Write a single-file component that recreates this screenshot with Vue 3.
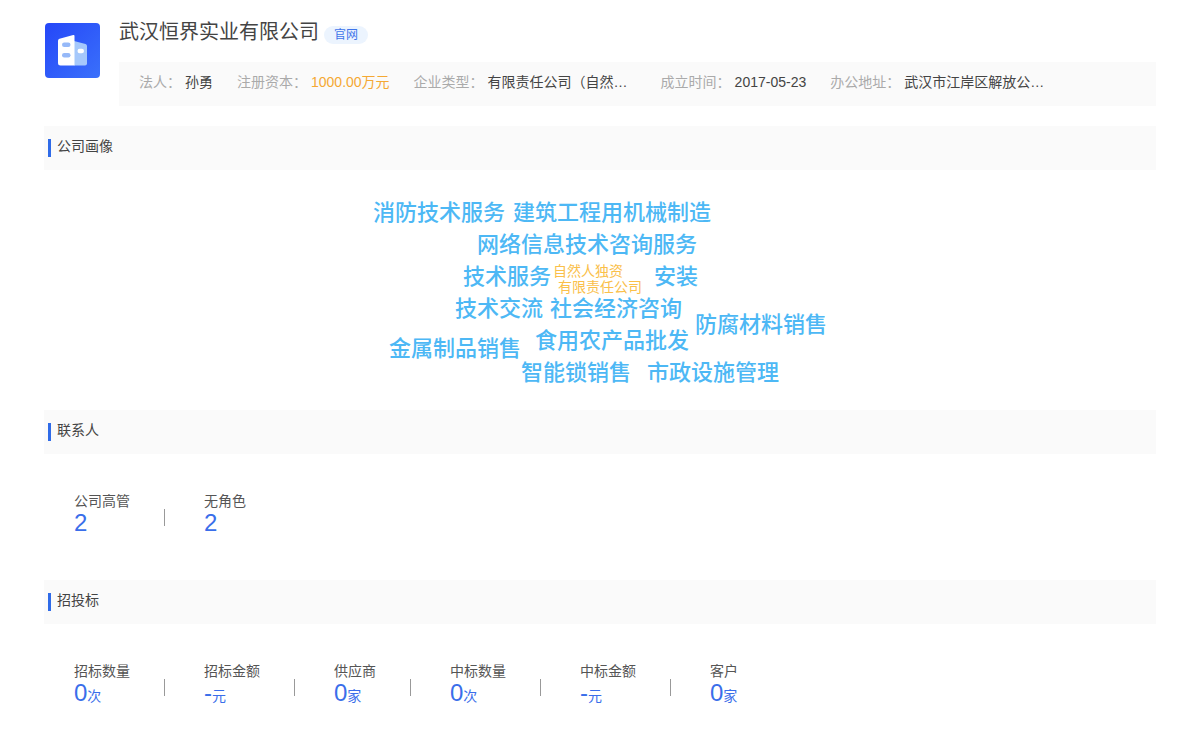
<script setup>
const info = [
  { label: '法人', value: '孙勇' },
  { label: '注册资本', value: '1000.00万元', money: true },
  { label: '企业类型', value: '有限责任公司（自然…', wide: true },
  { label: '成立时间', value: '2017-05-23' },
  { label: '办公地址', value: '武汉市江岸区解放公…', wide: true },
]

// Word positions are relative to the centre line and top of the cloud.
const words = [
  { text: '消防技术服务', x: -227, y: 27 },
  { text: '建筑工程用机械制造', x: -87, y: 27 },
  { text: '网络信息技术咨询服务', x: -123, y: 59 },
  { text: '技术服务', x: -137, y: 91 },
  { text: '自然人独资', x: -47, y: 90, minor: true },
  { text: '有限责任公司', x: -42, y: 106, minor: true },
  { text: '安装', x: 54, y: 91 },
  { text: '技术交流', x: -145, y: 123 },
  { text: '社会经济咨询', x: -50, y: 123 },
  { text: '防腐材料销售', x: 95, y: 139 },
  { text: '食用农产品批发', x: -65, y: 155 },
  { text: '金属制品销售', x: -211, y: 163 },
  { text: '智能锁销售', x: -79, y: 187 },
  { text: '市政设施管理', x: 47, y: 187 },
]

const contacts = [
  { label: '公司高管', value: '2' },
  { label: '无角色', value: '2' },
]

const bids = [
  { label: '招标数量', value: '0', unit: '次' },
  { label: '招标金额', value: '-', unit: '元' },
  { label: '供应商', value: '0', unit: '家' },
  { label: '中标数量', value: '0', unit: '次' },
  { label: '中标金额', value: '-', unit: '元' },
  { label: '客户', value: '0', unit: '家' },
]
</script>

<template>
  <main class="page">
    <header class="company">
      <svg class="logo" viewBox="0 0 55 55" aria-hidden="true">
        <defs>
          <linearGradient id="logo-bg" x1="0" y1="0" x2="1" y2="1">
            <stop offset="0" stop-color="#2547f8" />
            <stop offset="1" stop-color="#3a70fb" />
          </linearGradient>
        </defs>
        <rect width="55" height="55" rx="4" fill="url(#logo-bg)" />
        <path d="M29 18 L40.500 21 Q42 21.500 42 23 V40.500 Q42 42.500 40 42.500 H29Z" fill="#a5c8fb" />
        <path d="M14.500 15.700 L28.200 12 Q29.500 11.700 29.500 13 V42.500 H15.500 Q13 42.500 13 40 V17.500 Q13 16.200 14.500 15.700Z" fill="#fff" />
        <rect x="17" y="19.500" width="8.500" height="4.500" rx="2.200" fill="#96b9f8" />
        <rect x="17" y="30" width="8.500" height="4.500" rx="2.200" fill="#96b9f8" />
        <rect x="32.500" y="25.700" width="6.500" height="4.500" rx="2.200" fill="#fff" />
      </svg>
      <div class="summary">
        <div class="heading">
          <h1>武汉恒界实业有限公司</h1>
          <a class="site" href="#">官网</a>
        </div>
        <dl class="info">
          <div v-for="item in info" :key="item.label" class="info-item">
            <dt>{{ item.label }}：</dt>
            <dd :class="{ money: item.money, wide: item.wide }">{{ item.value }}</dd>
          </div>
        </dl>
      </div>
    </header>

    <section>
      <h2>公司画像</h2>
      <div class="cloud">
        <div class="origin">
          <span
            v-for="word in words"
            :key="word.text"
            class="word"
            :class="{ minor: word.minor }"
            :style="{ left: word.x + 'px', top: word.y + 'px' }"
          >{{ word.text }}</span>
        </div>
      </div>
    </section>

    <section>
      <h2>联系人</h2>
      <ul class="stats">
        <li v-for="item in contacts" :key="item.label">
          <span class="label">{{ item.label }}</span>
          <span class="value">{{ item.value }}</span>
        </li>
      </ul>
    </section>

    <section>
      <h2>招投标</h2>
      <ul class="stats">
        <li v-for="item in bids" :key="item.label">
          <span class="label">{{ item.label }}</span>
          <span class="value">{{ item.value }}<small>{{ item.unit }}</small></span>
        </li>
      </ul>
    </section>
  </main>
</template>

<style>
body {
  background: #fff;
}
</style>

<style scoped>
.page {
  padding: 20px 44px 0;
  font-family: "Liberation Sans", "Noto Sans CJK SC", sans-serif;
  font-size: 14px;
  line-height: 20px;
  color: #444;
}

h1,
h2,
dl,
dd,
ul {
  margin: 0;
  padding: 0;
  font-weight: inherit;
}

.company {
  display: flex;
  gap: 19px;
  margin-bottom: 20px;
}

.logo {
  flex: none;
  width: 55px;
  height: 55px;
  margin: 3px 0 0 1px;
}

.summary {
  flex: 1;
}

.heading {
  display: flex;
  gap: 5px;
  height: 42px;
}

h1 {
  font-size: 20px;
  line-height: 24px;
}

.site {
  align-self: flex-start;
  margin-top: 6px;
  padding: 0 10px;
  border-radius: 9px;
  background: #ecf4fe;
  color: #3f75ea;
  font-size: 12px;
  line-height: 18px;
  text-decoration: none;
}

.info {
  display: flex;
  flex-wrap: wrap;
  gap: 0 24px;
  padding: 10px 20px 14px;
  background: #fafafa;
}

.info-item {
  display: flex;
  gap: 4px;
}

dt {
  color: #aaa;
}

.wide {
  width: 149px;
}

.money {
  color: #f5a833;
}

h2 {
  display: flex;
  gap: 6px;
  padding: 10px 4px 14px;
  background: #fafafa;
  font-size: 14px;
}

h2::before {
  content: "";
  width: 3px;
  height: 18px;
  margin-top: 3px;
  margin-bottom: -1px;
  background: #2f6be8;
}

.cloud {
  height: 240px;
}

.origin {
  position: relative;
  width: 0;
  margin: 0 auto;
}

.word {
  position: absolute;
  color: #4db8f5;
  font-size: 22px;
  font-weight: 500;
  line-height: 32px;
  white-space: nowrap;
}

.word.minor {
  color: #fac04a;
  font-size: 14px;
  font-weight: 400;
  line-height: 22px;
}

.stats {
  display: flex;
  flex-wrap: wrap;
  padding: 37px 30px 45px;
  list-style: none;
}

li {
  display: flex;
  flex-direction: column;
  position: relative;
  margin-right: 74px;
}

li:not(:last-child)::after {
  content: "";
  position: absolute;
  right: -35px;
  top: 18px;
  width: 1px;
  height: 17px;
  background: #999;
}

.label {
  color: #555;
}

.value {
  color: #3a6eea;
  font-size: 24px;
  line-height: 24px;
}

small {
  font-size: 14px;
}
</style>
